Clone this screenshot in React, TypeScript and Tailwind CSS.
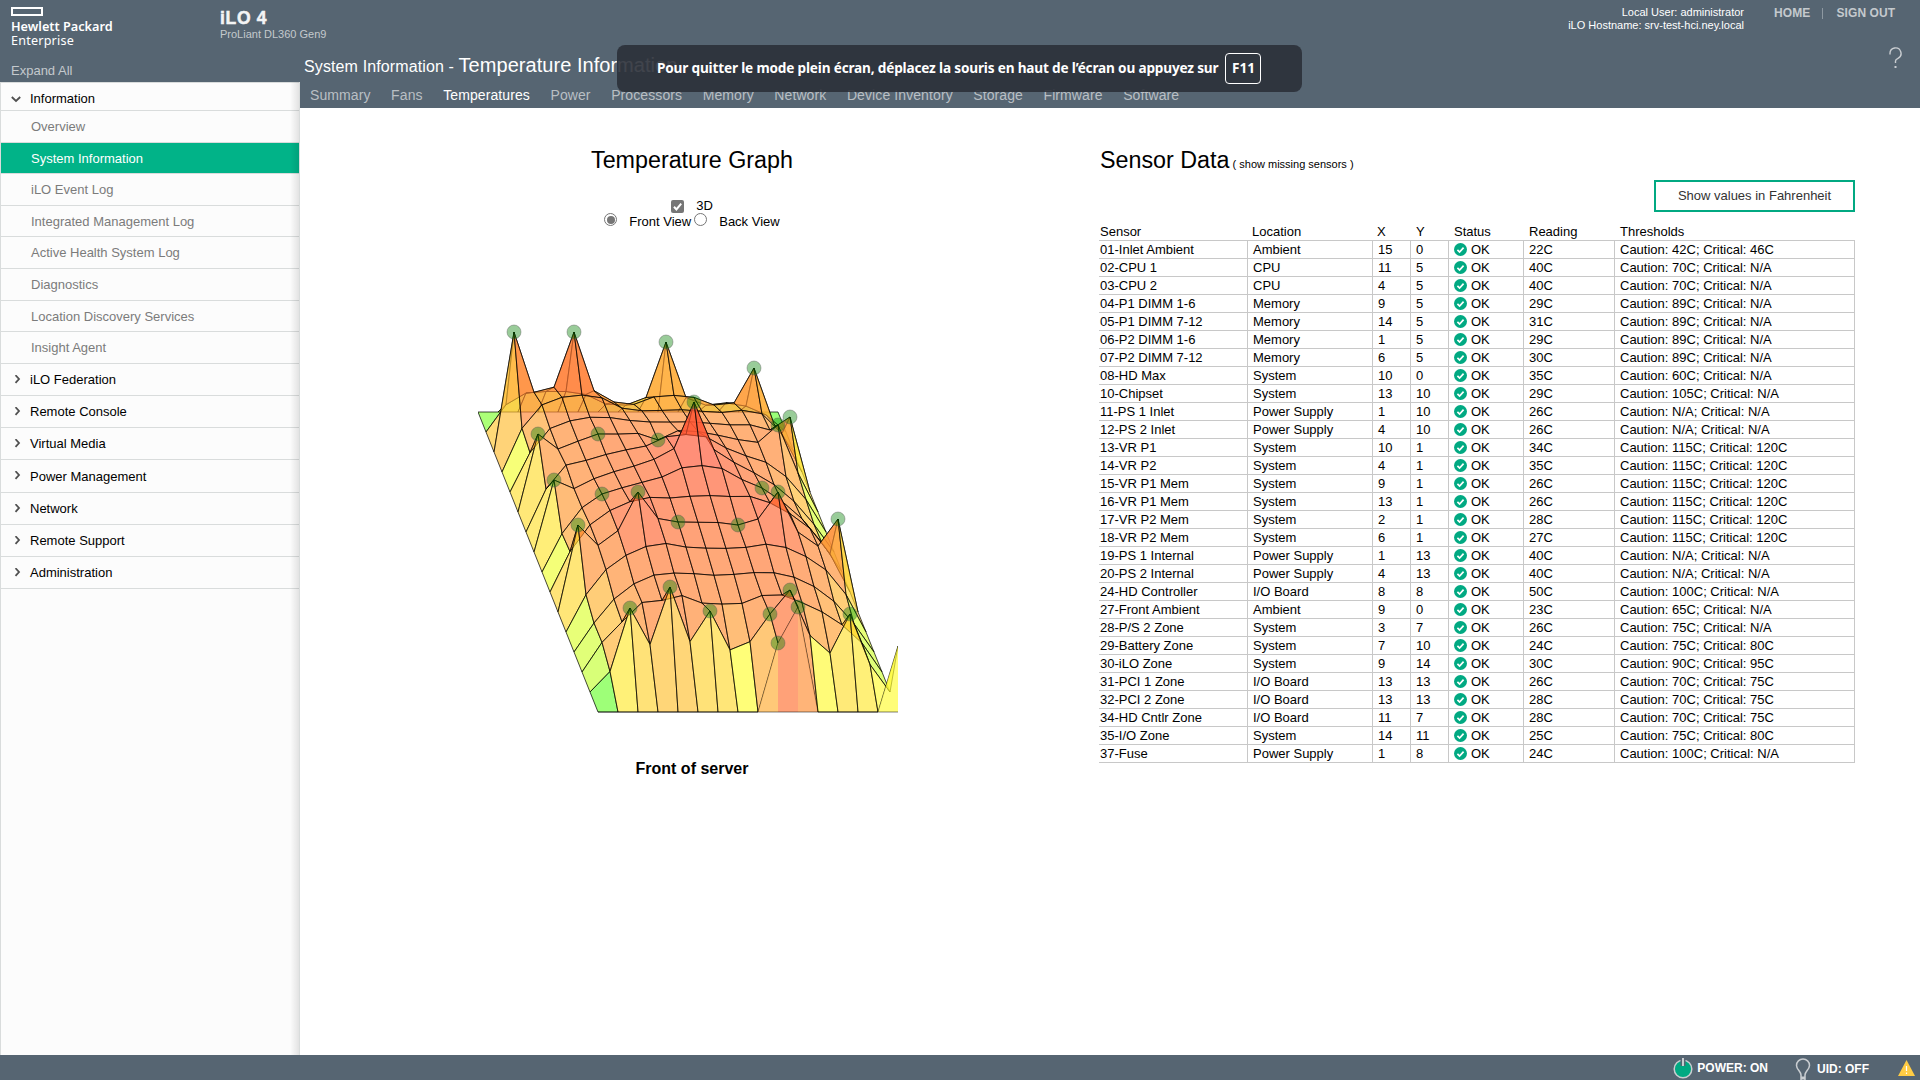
import React from "react";

type Sensor = [name: string, location: string, x: number, y: number, reading: number, caution: string, critical: string];

const SENSORS: Sensor[] = [
  ["01-Inlet Ambient", "Ambient", 15, 0, 22, "42C", "46C"],
  ["02-CPU 1", "CPU", 11, 5, 40, "70C", "N/A"],
  ["03-CPU 2", "CPU", 4, 5, 40, "70C", "N/A"],
  ["04-P1 DIMM 1-6", "Memory", 9, 5, 29, "89C", "N/A"],
  ["05-P1 DIMM 7-12", "Memory", 14, 5, 31, "89C", "N/A"],
  ["06-P2 DIMM 1-6", "Memory", 1, 5, 29, "89C", "N/A"],
  ["07-P2 DIMM 7-12", "Memory", 6, 5, 30, "89C", "N/A"],
  ["08-HD Max", "System", 10, 0, 35, "60C", "N/A"],
  ["10-Chipset", "System", 13, 10, 29, "105C", "N/A"],
  ["11-PS 1 Inlet", "Power Supply", 1, 10, 26, "N/A", "N/A"],
  ["12-PS 2 Inlet", "Power Supply", 4, 10, 26, "N/A", "N/A"],
  ["13-VR P1", "System", 10, 1, 34, "115C", "120C"],
  ["14-VR P2", "System", 4, 1, 35, "115C", "120C"],
  ["15-VR P1 Mem", "System", 9, 1, 26, "115C", "120C"],
  ["16-VR P1 Mem", "System", 13, 1, 26, "115C", "120C"],
  ["17-VR P2 Mem", "System", 2, 1, 28, "115C", "120C"],
  ["18-VR P2 Mem", "System", 6, 1, 27, "115C", "120C"],
  ["19-PS 1 Internal", "Power Supply", 1, 13, 40, "N/A", "N/A"],
  ["20-PS 2 Internal", "Power Supply", 4, 13, 40, "N/A", "N/A"],
  ["24-HD Controller", "I/O Board", 8, 8, 50, "100C", "N/A"],
  ["27-Front Ambient", "Ambient", 9, 0, 23, "65C", "N/A"],
  ["28-P/S 2 Zone", "System", 3, 7, 26, "75C", "N/A"],
  ["29-Battery Zone", "System", 7, 10, 24, "75C", "80C"],
  ["30-iLO Zone", "System", 9, 14, 30, "90C", "95C"],
  ["31-PCI 1 Zone", "I/O Board", 13, 13, 26, "70C", "75C"],
  ["32-PCI 2 Zone", "I/O Board", 13, 13, 28, "70C", "75C"],
  ["34-HD Cntlr Zone", "I/O Board", 11, 7, 28, "70C", "75C"],
  ["35-I/O Zone", "System", 14, 11, 25, "75C", "80C"],
  ["37-Fuse", "Power Supply", 1, 8, 24, "100C", "N/A"],
];

/* ---------- 3D temperature surface ---------- */

const N = 16;
const SCALE = 3;

function buildHeights(): number[][] {
  const h = Array.from({ length: N }, () => new Array<number>(N).fill(0));
  const fixed = Array.from({ length: N }, () => new Array<boolean>(N).fill(false));
  for (const [, , x, y, reading] of SENSORS) {
    h[N - 1 - y][x] = reading * SCALE;
    fixed[N - 1 - y][x] = true;
  }
  // Each free point relaxes to the mean of its eight neighbours.
  for (let pass = 0; pass < 300; pass++) {
    for (let j = 1; j < N - 1; j++) {
      for (let i = 1; i < N - 1; i++) {
        if (fixed[j][i]) continue;
        let sum = 0;
        for (let dj = -1; dj <= 1; dj++)
          for (let di = -1; di <= 1; di++) if (di || dj) sum += h[j + dj][i + di];
        h[j][i] = sum / 8;
      }
    }
  }
  return h;
}

const STOPS: [number, number, number][] = [
  [0, 0.1, 1],
  [5, 0.28, 1],
  [12, 0.7, 1],
  [16, 0.82, 1],
  [23, 1, 1],
  [26, 1, 0.9],
  [33, 1, 0.78],
  [38, 1, 0.7],
  [65, 1, 0.45],
  [88, 1, 0.31],
  [100, 1, 0.23],
  [130, 1, 0.12],
];

function heat(v: number): string {
  let k = 0;
  while (k < STOPS.length - 2 && v > STOPS[k + 1][0]) k++;
  const a = STOPS[k];
  const b = STOPS[k + 1];
  const t = Math.min(1, (v - a[0]) / (b[0] - a[0]));
  const r = Math.round(52 + 203 * (a[1] + t * (b[1] - a[1])));
  const g = Math.round(52 + 203 * (a[2] + t * (b[2] - a[2])));
  return `rgb(${r},${g},52)`;
}

function Surface() {
  const h = buildHeights();
  const px = (i: number, j: number) => 20 * i + 8 * j;
  const py = (i: number, j: number) => 112 + 20 * j - h[j][i];
  const pt = (i: number, j: number) => `${px(i, j)},${py(i, j).toFixed(1)}`;
  const cells: React.ReactNode[] = [];
  for (let j = 0; j < N - 1; j++) {
    for (let i = 0; i < N - 1; i++) {
      const avg = (h[j][i] + h[j][i + 1] + h[j + 1][i] + h[j + 1][i + 1]) / 4;
      const color = heat(avg);
      cells.push(
        <polygon
          key={`${i}-${j}`}
          points={`${pt(i, j)} ${pt(i + 1, j)} ${pt(i + 1, j + 1)} ${pt(i, j + 1)}`}
          fill={color}
          fillOpacity={0.667}
          stroke="#000"
          strokeOpacity={0.72}
        />,
      );
      if (j === N - 2 && h[N - 1][i] + h[N - 1][i + 1] > 0) {
        const x0 = px(i, N - 1);
        cells.push(
          <polygon
            key={`front-${i}`}
            points={`${pt(i, N - 1)} ${pt(i + 1, N - 1)} ${x0 + 20},412 ${x0},412`}
            fill={color}
            fillOpacity={0.667}
          />,
        );
      }
    }
  }
  return (
    <svg width="420" height="420" viewBox="0 0 420 420" className="block">
      {cells}
      <line x1="120" x2="420" y1="412" y2="412" stroke="#000" strokeOpacity="0.5" />
      {SENSORS.filter((s) => s[0] !== "31-PCI 1 Zone" && s[0] !== "01-Inlet Ambient").map((s) => (
        <circle
          key={s[0]}
          cx={px(s[2], N - 1 - s[3])}
          cy={py(s[2], N - 1 - s[3])}
          r={7}
          fill="#008000"
          fillOpacity={0.4}
          stroke="#555"
          strokeOpacity={0.4}
        />
      ))}
    </svg>
  );
}

/* ---------- Navigation ---------- */

const SUB = [
  "Overview",
  "System Information",
  "iLO Event Log",
  "Integrated Management Log",
  "Active Health System Log",
  "Diagnostics",
  "Location Discovery Services",
  "Insight Agent",
];
const TOP = [
  "iLO Federation",
  "Remote Console",
  "Virtual Media",
  "Power Management",
  "Network",
  "Remote Support",
  "Administration",
];
const TABS = [
  "Summary",
  "Fans",
  "Temperatures",
  "Power",
  "Processors",
  "Memory",
  "Network",
  "Device Inventory",
  "Storage",
  "Firmware",
  "Software",
];

function Chevron({ open = false }: { open?: boolean }) {
  return (
    <svg width="10" height="10" viewBox="0 0 10 10" className="shrink-0" fill="none" stroke="#505050" strokeWidth="1.8">
      <path d={open ? "M0.8 3 L5 7 L9.2 3" : "M4.5 0.2 L8 4 L4.5 7.8"} />
    </svg>
  );
}

function Sidebar() {
  return (
    <aside className="relative flex w-[300px] shrink-0 flex-col border-x border-[#d9dcdc] bg-[#fcfcfc] text-[13px]">
      <div className="flex h-[29px] shrink-0 items-center gap-[9px] border-t border-b border-[#d9dcdc] pl-[10px] pt-1 text-black">
        <Chevron open />
        <span>Information</span>
      </div>
      {SUB.map((s) =>
        s === "System Information" ? (
          <div
            key={s}
            className="flex h-[31.6px] shrink-0 items-center border-b border-[#d9dcdc] bg-[#01b388] pl-[30px] pt-px text-white"
          >
            {s}
          </div>
        ) : (
          <div
            key={s}
            className="flex h-[31.6px] shrink-0 items-center border-b border-[#d9dcdc] pl-[30px] pt-px text-[#7b7b7b]"
          >
            {s}
          </div>
        ),
      )}
      {TOP.map((s) => (
        <div
          key={s}
          className="flex h-[32.2px] shrink-0 items-center gap-[9px] border-b border-[#d9dcdc] pl-[10px] pt-px text-black"
        >
          <Chevron />
          <span>{s}</span>
        </div>
      ))}
      <div className="pointer-events-none absolute inset-y-0 right-0 w-[9px] bg-gradient-to-r from-transparent to-black/10" />
    </aside>
  );
}

function Header() {
  return (
    <header className="flex h-[82px] shrink-0 bg-[#566572] text-white">
      <div className="w-[220px] shrink-0 pl-[11px] pt-[7px]">
        <div className="h-[9px] w-8 border-2 border-white" />
        <div className="mt-1 font-['Noto_Sans'] text-[12.7px] font-semibold leading-[13px]">Hewlett Packard</div>
        <div className="mt-px font-['Noto_Sans'] text-[12.6px] leading-[13px] tracking-[0.2px]">Enterprise</div>
        <div className="mt-4 text-[13px] leading-4 text-[#c4c9cd]">Expand All</div>
      </div>
      <div className="flex-1">
        <div className="mt-[9px] text-[17.5px] font-bold leading-[18px] tracking-[0.7px] text-[#f3f4f5] [-webkit-text-stroke:0.5px_#f3f4f5]">
          iLO 4
        </div>
        <div className="text-[11px] font-medium leading-[14px] text-[#c4c9cd]">ProLiant DL360 Gen9</div>
        <div className="ml-[84px] mt-[12px] flex items-baseline whitespace-pre leading-6">
          <span className="text-base tracking-[0.12px]">System Information - </span>
          <span className="text-[20px] tracking-[0.04px]">Temperature Information</span>
        </div>
      </div>
      <div className="mt-[6px] text-right text-[11px] leading-[13px]">
        <div>Local User: administrator</div>
        <div>iLO Hostname: srv-test-hci.ney.local</div>
      </div>
      <div className="ml-[30px] w-[146px] pt-[5px]">
        <div className="flex items-center text-[12px] font-bold leading-4 tracking-[0.1px] text-[#c4c9cd]">
          <span>HOME</span>
          <span className="ml-[12px] mr-[13px] h-[11px] w-px bg-[#8d98a1]" />
          <span className="whitespace-nowrap">SIGN OUT</span>
        </div>
        <svg
          width="14"
          height="22"
          viewBox="0 0 14 22"
          className="ml-[115px] mt-[26px]"
          fill="none"
          stroke="#c9cdd1"
          strokeWidth="1.4"
        >
          <path d="M1 7.5 V6.5 A5.5 5.5 0 1 1 9 11.3 C7.2 12.2 6.5 12.6 6.5 14 V16" />
          <path d="M5.5 20 H7.5" strokeWidth="2" />
        </svg>
      </div>
    </header>
  );
}

function OkIcon() {
  return (
    <svg width="13" height="13" viewBox="0 0 13 13" className="shrink-0">
      <circle cx="6.5" cy="6.5" r="6.5" fill="#01a982" />
      <path d="M3.4 6.8 L5.6 9 L9.6 4.6" fill="none" stroke="#fff" strokeWidth="1.7" />
    </svg>
  );
}

const GRID = "grid grid-cols-[149px_125px_38px_38px_75px_91px_240px]";

function SensorTable() {
  return (
    <div className="mt-[10px] w-[756px] text-[13px] leading-[17px] text-black">
      <div className={`${GRID} h-[18px] pt-px`}>
        <span className="pl-px">Sensor</span>
        <span className="pl-1">Location</span>
        <span className="pl-1">X</span>
        <span className="pl-[5px]">Y</span>
        <span className="pl-[5px]">Status</span>
        <span className="pl-[5px]">Reading</span>
        <span className="pl-[5px]">Thresholds</span>
      </div>
      <div className="border-t border-[#c8c8c8]">
        {SENSORS.map(([name, loc, x, y, reading, caution, critical]) => (
          <div key={name} className={`${GRID} h-[18px] border-b border-[#c8c8c8] whitespace-nowrap`}>
            <span className="border-r border-[#c8c8c8] pl-px">{name}</span>
            <span className="border-r border-[#c8c8c8] pl-[5px]">{loc}</span>
            <span className="border-r border-[#c8c8c8] pl-[5px]">{x}</span>
            <span className="border-r border-[#c8c8c8] pl-[5px]">{y}</span>
            <span className="flex items-center gap-1 border-r border-[#c8c8c8] pl-[5px]">
              <OkIcon />
              OK
            </span>
            <span className="border-r border-[#c8c8c8] pl-[5px]">{reading}C</span>
            <span className="border-r border-[#c8c8c8] pl-[5px]">
              Caution: {caution}; Critical: {critical}
            </span>
          </div>
        ))}
      </div>
    </div>
  );
}

function GraphPanel() {
  return (
    <section className="flex w-[784px] shrink-0 flex-col items-center pt-[37px] text-black">
      <h2 className="text-[23.3px] leading-[30px]">Temperature Graph</h2>
      <div className="mt-[23px] flex h-[15px] items-center text-[13px]">
        <svg width="13" height="13" viewBox="0 0 13 13" className="mr-3 mt-[1px]">
          <rect width="13" height="13" rx="2" fill="#767676" />
          <path d="M3 6.8 L5.4 9.4 L10.2 3.6" fill="none" stroke="#fff" strokeWidth="2" />
        </svg>
        3D
      </div>
      <div className="flex h-4 items-center pt-[2px] text-[13px]">
        <span className="mb-[5px] mr-3 flex size-[13px] items-center justify-center rounded-full border border-[#767676]">
          <span className="size-[8px] rounded-full bg-[#767676]" />
        </span>
        Front View
        <span className="mb-[5px] ml-[3px] mr-3 size-[13px] rounded-full border border-[#767676]" />
        Back View
      </div>
      <div className="mr-[8px] mt-[71px]">
        <Surface />
      </div>
      <div className="mt-[39px] text-base font-bold leading-5">Front of server</div>
    </section>
  );
}

export default function App() {
  return (
    <div className="relative flex h-[1080px] w-[1920px] flex-col overflow-hidden bg-white font-['Liberation_Sans',Arial,sans-serif]">
      <Header />
      <div className="flex min-h-0 flex-1">
        <Sidebar />
        <main className="flex min-w-0 flex-1 flex-col">
          <nav className="flex h-[26px] shrink-0 gap-[20.5px] bg-[#566572] pl-[10px] text-sm leading-[26px] tracking-[0.1px] text-[#b9bfc4]">
            {TABS.map((t) =>
              t === "Temperatures" ? (
                <span key={t} className="text-white">
                  {t}
                </span>
              ) : (
                <span key={t}>{t}</span>
              ),
            )}
          </nav>
          <div className="flex flex-1">
            <GraphPanel />
            <section className="ml-[15px] pt-[37px]">
              <h2 className="ml-px flex items-baseline whitespace-pre text-[23.3px] leading-[30px] text-black">
                Sensor Data<span className="text-[11px]"> ( show missing sensors )</span>
              </h2>
              <div className="mt-px flex w-[756px] justify-end">
                <button className="h-8 w-[201px] border-2 border-[#01a982] text-[13px] text-[#333]">
                  Show values in Fahrenheit
                </button>
              </div>
              <SensorTable />
            </section>
          </div>
        </main>
      </div>
      <footer className="flex h-[25px] shrink-0 items-center justify-end bg-[#566572] text-[12px] font-bold text-white">
        <svg width="20" height="22" viewBox="0 0 20 22" className="mr-1">
          <circle cx="10" cy="12" r="8.8" fill="#01a982" stroke="#c9cdd1" strokeWidth="1.5" />
          <path d="M10 1 V9" stroke="#566572" strokeWidth="5" />
          <path d="M10 1 V9" stroke="#c9cdd1" strokeWidth="2" />
        </svg>
        <span className="mr-[27px]">POWER: ON</span>
        <svg width="16" height="22" viewBox="0 0 16 22" className="mr-[6px] mt-[3px]" fill="none" stroke="#c9cdd1" strokeWidth="1.5">
          <path d="M6 22 V17 C6 13.5 1.5 11.5 1.5 7.5 A6.5 6.5 0 0 1 14.5 7.5 C14.5 11.5 10 13.5 10 17 V22" />
          <path d="M6 20 H10" strokeWidth="3" />
        </svg>
        <span className="mr-[29px] mt-[2px]">UID: OFF</span>
        <svg width="17" height="16" viewBox="0 0 17 16" className="mr-[5px]">
          <path d="M8.5 0 L17 16 H0 Z" fill="#ffcc44" />
          <path d="M8.5 6 V11 M8.5 12.5 V14" stroke="#fff" strokeWidth="1.2" />
        </svg>
      </footer>
      <div className="absolute left-[617px] top-[45px] flex h-[47px] w-[685px] items-center rounded-lg bg-[#2b3038]/90 pl-[40px] font-['Noto_Sans'] text-[13.6px] font-bold text-white">
        <span className="whitespace-nowrap tracking-[-0.17px]">
          Pour quitter le mode plein écran, déplacez la souris en haut de l’écran ou appuyez sur
        </span>
        <span className="ml-[7px] flex h-[31px] w-[36px] items-center justify-center rounded border border-white">
          F11
        </span>
      </div>
    </div>
  );
}
